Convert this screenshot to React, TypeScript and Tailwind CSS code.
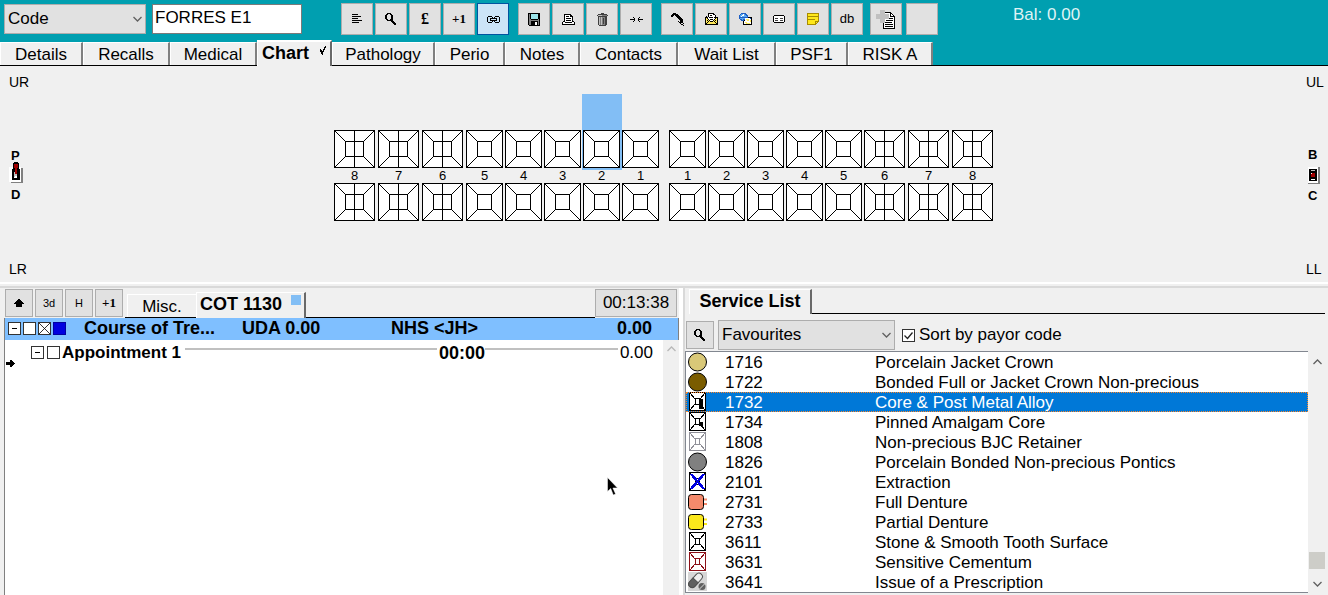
import { ReactNode } from "react"
import clsx from "clsx"

const PALETTE: Record<string, string> = {
    "#": "#000000",
    g: "#808080",
    l: "#c0c0c0",
    d: "#404040",
    w: "#ffffff",
    c: "#9be4ea",
    y: "#ffe95c",
    b: "#1f5fc4",
    s: "#58a8f0",
    r: "#a00000",
}

// small bitmap icons, one character per pixel
const Pixels = ({ rows, className }: { rows: string[]; className?: string }) => (
    <svg
        width={rows[0].length}
        height={rows.length}
        shapeRendering="crispEdges"
        className={clsx("shrink-0", className)}
        aria-hidden="true"
    >
        {rows.map((row, y) =>
            row.split("").map((c, x) =>
                PALETTE[c] ? <rect key={`${x}-${y}`} x={x} y={y} width={1} height={1} fill={PALETTE[c]} /> : null
            )
        )}
    </svg>
)

const LINES = [
    "######....",
    "..........",
    "#########.",
    "..........",
    "######....",
    "..........",
    "##########",
    "..........",
    "#######...",
    "..........",
]

const SEARCH = [
    "..####......",
    ".##..##.....",
    "##....##....",
    "##....##....",
    "##....##....",
    "##....##....",
    ".##..###....",
    "..######....",
    "......###...",
    ".......###..",
    "........###.",
    ".........##.",
]

const LINK = [
    ".####...####.",
    "#....#.#....#",
    "#..#######..#",
    "#..#.....#..#",
    "#..#######..#",
    "#....#.#....#",
    ".####...####.",
]

const SAVE = [
    "############",
    "#g#ccccccc##",
    "#g#ccccccc##",
    "#g#ccccccc##",
    "#g#ccccccc##",
    "#g#ccccccc##",
    "#gg#######g#",
    "#gggggggggg#",
    "#gg#######g#",
    "#gg####ww#g#",
    "#gg####ww#g#",
    "#gg####ww#g#",
    ".###########",
]

const PRINT = [
    "..#######....",
    "..#wwwww##...",
    "..#w###w###..",
    "..#wwwwwww#..",
    "..#w#####w#..",
    "..#wwwwwww#..",
    "..#w#####w#..",
    ".##wwwwwww##.",
    "#ww#######ww#",
    "#wwwwwwwwwww#",
    "#############",
]

const TRASH = [
    "....ddd....",
    ".ddddddddd.",
    "dllllgggggd",
    ".ddddddddd.",
    ".dlglgggdd.",
    ".dlglgdgdd.",
    ".dlglgdgdd.",
    ".dlglgdgdd.",
    ".dlglgdgdd.",
    ".dlglgdgdd.",
    ".dlglgdgdd.",
    ".dlglgggdd.",
    "..ddddddd..",
]

const MERGE = [
    "...#.....#...",
    "....#...#....",
    "#####...#####",
    "....#...#....",
    "...#.....#...",
]

const PHONE = [
    "..###........",
    ".######......",
    "###.####.....",
    "##...####....",
    "......####...",
    ".......####..",
    "........####.",
    ".........###.",
    ".......#.###.",
    "........####.",
    ".........#..#",
    "..........##.",
    "............#",
]

const MAIL = [
    "...######....",
    "...#wwww##...",
    "...#w##www#..",
    ".#.#wwwwww#..",
    "###w####w####",
    "#y#wwwwwww#y#",
    "#yy#w###w#yy#",
    "#y#y#www#y#y#",
    "#yy#y###y#yy#",
    "#y#yyyyyyy#y#",
    "##yyyyyyyyy##",
    "#############",
]

const WEBMAIL = [
    "..bbbbb......",
    ".bsswsbb.....",
    "bsswwssbb....",
    "bswsssssb....",
    "bbbbbbbbb####",
    "bssssswwwwwb#",
    ".bbsbbwyyyww#",
    "..bbb#wwyywy#",
    "....#wwwwwwy#",
    "....#wyywwww#",
    "....#wwyyyyw#",
    "....#########",
]

const CARD = [
    ".##########.",
    "#wwwwwwwwww#",
    "#wwwwwwwwww#",
    "#wdddwwdddw#",
    "#wwwwwwwwww#",
    "#wdddwwdddw#",
    "#wwwwwwwwww#",
    ".##########.",
]

const COPY = [
    "....lllll...........",
    "....lllll...........",
    "....lllll######.....",
    "....lllllwwwww##....",
    "lllllllllllllw#w#...",
    "lllllllllllllw#ww#..",
    "lllllllllllllw#####.",
    "lllllllllllllwwwww#.",
    "lllllllllllll####w#.",
    "....lllllwwwwwwwww#.",
    "....lllllw#######w#.",
    "....lllllwwwwwwwww#.",
    "....lllll#######ww#.",
    ".......#wwwwwwwwww#.",
    ".......#w########w#.",
    ".......#wwwwwwwwww#.",
    ".......#w########w#.",
    ".......#wwwwwwwwww#.",
    ".......############.",
]

const UP = [
    "....##....",
    "...####...",
    "..######..",
    ".########.",
    "##########",
    "..######..",
    "..######..",
    "..######..",
]

const ARROW = [
    "....##...",
    "....###..",
    "########.",
    "#########",
    "########.",
    "....###..",
    "....##...",
]

const TICK = [
    ".....#",
    "....##",
    "....#.",
    "#..##.",
    "##.#..",
    "####..",
    ".##...",
    ".##...",
    "..#...",
]

const SWITCH_UP = [
    ".....####.....",
    "....######....",
    "....#rrrr#....",
    "....#rrrr#....",
    "....#rrrr#....",
    "wwww#rrrr#ww..",
    "wwww##rr##wwgg",
    "www###rr###wgg",
    "www###rr###wgg",
    "www###rr###wgg",
    "www##lrr###wgg",
    "www##lrr###wgg",
    "www##lll###wgg",
    "www##lll###wgg",
    "www##lww###wgg",
    "www##www###wgg",
    "www########wgg",
    "www########wgg",
    "wwwwwwwwwwwwgg",
    "wwwwwwwwwwwwgg",
    "..gggggggggggg",
]

const SWITCH_MID = [
    "wwwwwwwwwwgg",
    "wwwwwwwwwwgg",
    "w########wgg",
    "w##llll##wgg",
    "w########wgg",
    "w########wgg",
    "w##wrrr##wgg",
    "w##rrrr##wgg",
    "w##rrrr##wgg",
    "w##rrrr##wgg",
    "w########wgg",
    "w########wgg",
    "w##wwww##wgg",
    "w########wgg",
    "wwwwwwwwwwgg",
    "wwwwwwwwwwgg",
    "gggggggggggg",
]

const Note = () => (
    <svg width="12" height="12" shapeRendering="crispEdges" aria-hidden="true">
        <path d="M.5 .5h11v8l-3 3h-8z" fill="#ffe81a" stroke="#a88c00" />
        <path d="M1 3.5h10M1 6.5h7M8.5 11v-3h3" fill="none" stroke="#a88c00" />
    </svg>
)

const Chevron = ({ up, className }: { up?: boolean; className?: string }) => (
    <svg width="9" height="6" viewBox="0 0 9 6" fill="none" stroke="currentColor" strokeWidth="1.3" className={className} aria-hidden="true">
        <path d={up ? "M.5 5l4-4 4 4" : "M.5 1l4 4 4-4"} />
    </svg>
)

type ToolButtonProps = { label: string; active?: boolean; small?: boolean; children?: ReactNode }

const ToolButton = ({ label, active, small, children }: ToolButtonProps) => (
    <button
        aria-label={label}
        className={clsx(
            "flex shrink-0 items-center justify-center border",
            small ? "size-7 text-[11px]" : "size-8 text-sm",
            active ? "border-[#0054a0] bg-[#cce4f7]" : "border-[#adadad] bg-[#e1e1e1]"
        )}
    >
        {children}
    </button>
)

const PlusOne = () => <span className="font-['Liberation_Serif',serif] text-[13px] font-bold">+1</span>

const Combo = ({ label, value, className }: { label: string; value: string; className: string }) => (
    <div className={clsx("relative shrink-0", className)}>
        <select
            aria-label={label}
            className="block h-[30px] w-full appearance-none border border-[#adadad] bg-[#e1e1e1] pl-[3px] leading-7"
        >
            <option>{value}</option>
        </select>
        <Chevron className="pointer-events-none absolute top-3 right-1 text-[#606060]" />
    </div>
)

const Toolbar = () => (
    <div className="flex h-[42px] items-start pt-[3px] pl-1">
        <Combo label="Search by" value="Code" className="mt-px w-[142px]" />
        <input
            aria-label="Patient"
            defaultValue="FORRES E1"
            className="mt-px ml-1.5 h-[30px] w-[150px] border border-[#7a7a7a] bg-white px-0.5 pb-0.5"
        />
        <div className="ml-[39px] flex gap-0.5">
            <ToolButton label="List"><Pixels rows={LINES} /></ToolButton>
            <ToolButton label="Find"><Pixels rows={SEARCH} /></ToolButton>
            <ToolButton label="Payments">
                <span className="font-['Liberation_Serif',serif] text-base font-bold">£</span>
            </ToolButton>
            <ToolButton label="Add one"><PlusOne /></ToolButton>
            <ToolButton label="Link" active><Pixels rows={LINK} /></ToolButton>
        </div>
        <div className="ml-[9px] flex gap-0.5">
            <ToolButton label="Save"><Pixels rows={SAVE} /></ToolButton>
            <ToolButton label="Print"><Pixels rows={PRINT} /></ToolButton>
            <ToolButton label="Delete"><Pixels rows={TRASH} /></ToolButton>
            <ToolButton label="Merge"><Pixels rows={MERGE} /></ToolButton>
        </div>
        <div className="ml-[9px] flex gap-0.5">
            <ToolButton label="Phone"><Pixels rows={PHONE} /></ToolButton>
            <ToolButton label="Letter"><Pixels rows={MAIL} /></ToolButton>
            <ToolButton label="Email"><Pixels rows={WEBMAIL} /></ToolButton>
            <ToolButton label="SMS"><Pixels rows={CARD} /></ToolButton>
            <ToolButton label="Sticky note"><Note /></ToolButton>
            <ToolButton label="Database"><span className="text-[13px]">db</span></ToolButton>
        </div>
        <div className="ml-[7px] flex gap-1">
            <ToolButton label="New document"><Pixels rows={COPY} /></ToolButton>
            <ToolButton label="Blank" />
        </div>
        <p className="ml-[75px] leading-6 text-[#dff3f5]">Bal: 0.00</p>
    </div>
)

const TABS = [
    { name: "Details", width: "w-[83px]" },
    { name: "Recalls", width: "w-[87px]" },
    { name: "Medical", width: "w-[87px]" },
    { name: "Chart", width: "w-[75px]" },
    { name: "Pathology", width: "w-[103px]" },
    { name: "Perio", width: "w-[70px]" },
    { name: "Notes", width: "w-[75px]" },
    { name: "Contacts", width: "w-[98px]" },
    { name: "Wait List", width: "w-[98px]" },
    { name: "PSF1", width: "w-[72px]" },
    { name: "RISK A", width: "w-[85px]" },
]

const TabBar = () => (
    <nav className="flex h-6 items-end border-b border-black">
        {TABS.map(({ name, width }) =>
            name === "Chart" ? (
                <button
                    key={name}
                    className={clsx(
                        "-mb-px flex h-[26px] shrink-0 items-start justify-between border-t-2 border-r-2 border-l border-white border-r-[#696969] bg-[#f0f0f0] pr-1 pl-1 text-lg leading-[22px] font-bold",
                        width
                    )}
                >
                    {name}
                    <Pixels rows={TICK} className="mt-1" />
                </button>
            ) : (
                <button
                    key={name}
                    className={clsx(
                        "h-[23px] shrink-0 border-t border-r-2 border-l border-white border-r-[#808080] bg-[#f0f0f0] pt-0.5 leading-5",
                        width
                    )}
                >
                    {name}
                </button>
            )
        )}
    </nav>
)

const Tooth = ({ molar }: { molar: boolean }) => {
    const w = molar ? 41 : 37
    const r = w - 12
    return (
        <svg width={w} height="38" fill="none" stroke="#000" shapeRendering="crispEdges" className="relative block">
            <rect x=".5" y=".5" width={w - 1} height="37" fill="#fff" />
            <path d={`M0 0L11.5 11.5M${w} 0L${r + 0.5} 11.5M0 38L11.5 26.5M${w} 38L${r + 0.5} 26.5`} />
            <rect x="11.5" y="11.5" width={r - 11} height="15" />
            {molar && <path d="M20.5 0v38" />}
        </svg>
    )
}

const Quadrants = ({ teeth, selected }: { teeth: number[]; selected?: number }) => (
    <div className="flex">
        {teeth.map((n) => {
            const molar = n > 5
            return (
                <div key={n} className={clsx("relative", molar ? "w-11" : "w-[39px]")}>
                    {n === selected && <div className="absolute -top-9 -left-px h-[76px] w-10 bg-[#82bef5]" />}
                    <Tooth molar={molar} />
                    <p className={clsx("relative text-center text-[13px] leading-[15px]", molar ? "w-[41px]" : "w-[37px]")}>{n}</p>
                    <Tooth molar={molar} />
                </div>
            )
        })}
    </div>
)

const ToothChart = () => (
    <section className="flex justify-between text-sm leading-4">
        <div className="flex w-12 flex-col justify-between pt-2 pb-[5px] pl-[9px]">
            <p>UR</p>
            <div className="flex flex-col items-start text-[13px] leading-3 font-bold">
                <span className="pl-0.5">P</span>
                <Pixels rows={SWITCH_UP} className="mb-1.5" />
                <span className="pl-0.5">D</span>
            </div>
            <p>LR</p>
        </div>
        <div className="flex gap-2 pt-16 pb-[61px] pl-0.5">
            <Quadrants teeth={[8, 7, 6, 5, 4, 3, 2, 1]} selected={2} />
            <Quadrants teeth={[1, 2, 3, 4, 5, 6, 7, 8]} />
        </div>
        <div className="flex w-12 flex-col justify-between pt-2 pb-[5px] pl-[26px]">
            <p>UL</p>
            <div className="flex flex-col items-start pl-0.5 text-[13px] leading-3 font-bold">
                <span>B</span>
                <Pixels rows={SWITCH_MID} className="my-1.5" />
                <span>C</span>
            </div>
            <p>LL</p>
        </div>
    </section>
)

const TreeBox = ({ kind }: { kind: "minus" | "empty" | "cross" | "blue" }) => (
    <svg width="13" height="13" fill="none" stroke="#000" className="shrink-0" aria-hidden="true">
        <rect x=".5" y=".5" width="12" height="12" fill={kind === "blue" ? "#0000e0" : "#fff"} stroke={kind === "blue" ? "#0000a0" : "#333"} />
        {kind === "minus" && <path d="M4 6.5h5" />}
        {kind === "cross" && <path d="M1 1l11 11M12 1L1 12" strokeWidth=".8" />}
    </svg>
)

const Treatment = () => (
    <section className="flex min-w-0 flex-1 flex-col border-r-4 border-white pt-px pl-1">
        <div className="flex h-[29px] items-start pr-0.5 pl-px">
            <div className="flex gap-0.5">
                <ToolButton label="Up" small><Pixels rows={UP} /></ToolButton>
                <ToolButton label="3D view" small>3d</ToolButton>
                <ToolButton label="History" small>H</ToolButton>
                <ToolButton label="Add one" small><PlusOne /></ToolButton>
            </div>
            <div className="ml-0.5 flex h-full flex-1 items-end border-b border-black pl-0.5">
                <button className="h-[23px] w-[69px] border-t border-l border-white leading-6">Misc.</button>
                <button className="-mb-px flex h-[26px] w-[110px] items-start justify-between border-t border-r-2 border-l border-white border-r-[#696969] bg-[#f0f0f0] pr-[3px] pl-[3px] text-lg leading-[22px] font-bold">
                    COT 1130
                    <span className="mt-0.5 size-2.5 bg-[#82bef5]" />
                </button>
            </div>
            <button className="h-7 w-[82px] border border-[#adadad] bg-[#e1e1e1] leading-6">00:13:38</button>
        </div>
        <div className="relative flex flex-1 flex-col border-l border-[#808080] bg-white">
            <div className="flex h-[22px] items-center border-r border-[#808080] bg-[#7fbfff] pr-[26px] pb-0.5 text-lg leading-5 font-bold">
                <div className="flex w-[79px] shrink-0 gap-0.5 pl-[3px]">
                    <TreeBox kind="minus" />
                    <TreeBox kind="empty" />
                    <TreeBox kind="cross" />
                    <TreeBox kind="blue" />
                </div>
                <span className="w-[158px] shrink-0">Course of Tre...</span>
                <span className="w-[149px] shrink-0">UDA 0.00</span>
                <span className="shrink-0">NHS &lt;JH&gt;</span>
                <span className="flex-1 text-right">0.00</span>
            </div>
            <div className="flex flex-1">
                <div className="min-w-0 flex-1">
                    <div className="flex h-6 items-center pt-px pr-2.5 pl-[26px]">
                        <div className="flex w-[31px] shrink-0 gap-[3px]">
                            <TreeBox kind="minus" />
                            <TreeBox kind="empty" />
                        </div>
                        <span className="w-[123px] shrink-0 font-bold">Appointment 1</span>
                        <hr className="mr-0.5 mb-2 w-[252px] shrink-0 border-t-2 border-[#c0c0c0]" />
                        <span className="text-lg font-bold">00:00</span>
                        <hr className="mr-0.5 mb-2 flex-1 border-t-2 border-[#c0c0c0]" />
                        <span>0.00</span>
                    </div>
                    <Pixels rows={ARROW} className="ml-px -mt-1" />
                </div>
                <div className="flex w-4 justify-center bg-[#f0f0f0] pt-1.5 text-[#b8b8b8]">
                    <Chevron up />
                </div>
            </div>
            <svg width="12" height="19" className="absolute top-[159px] left-[602px]" aria-hidden="true">
                <path d="M.5 .5v14l3.200-3 2.600 6.500 2.300-1-2.700-6h4.600z" fill="#000" stroke="#fff" strokeWidth=".5" />
            </svg>
        </div>
    </section>
)

const Round = ({ fill }: { fill: string }) => <circle cx="9.5" cy="10" r="9" fill={fill} stroke="#000" />

const Surface = ({ color, children }: { color: string; children?: ReactNode }) => (
    <g fill="none" stroke={color} shapeRendering="crispEdges">
        <rect x="1.5" y=".5" width="16" height="18" fill="#fff" />
        <path d="M2 1l5 6M17 1l-5 6M2 18l5-6M17 18l-5-6" />
        <rect x="7.5" y="6.5" width="4" height="6" />
        {children}
    </g>
)

const Denture = ({ fill }: { fill: string }) => (
    <>
        <path d="M16 7.5h3M16 12h3" stroke={fill} strokeWidth="2" />
        <rect x=".5" y="2.5" width="15" height="15" rx="3" fill={fill} stroke="#000" />
    </>
)

const SERVICES = [
    { code: "1716", name: "Porcelain Jacket Crown", icon: <Round fill="#d9c878" /> },
    { code: "1722", name: "Bonded Full or Jacket Crown Non-precious", icon: <Round fill="#7a5c00" /> },
    {
        code: "1732",
        name: "Core & Post Metal Alloy",
        icon: (
            <Surface color="#000">
                <path d="M11.5 7.5h3v9h-3z" fill="#000" />
            </Surface>
        ),
    },
    {
        code: "1734",
        name: "Pinned Amalgam Core",
        icon: (
            <Surface color="#000">
                <path d="M11.5 10.5h3v3h-3z" fill="#000" />
            </Surface>
        ),
    },
    { code: "1808", name: "Non-precious BJC Retainer", icon: <Surface color="#909098" /> },
    { code: "1826", name: "Porcelain Bonded Non-precious Pontics", icon: <Round fill="#808080" /> },
    {
        code: "2101",
        name: "Extraction",
        icon: (
            <Surface color="#000">
                <path d="M3 2l13 15M16 2L3 17" stroke="#0000e0" strokeWidth="2.5" />
            </Surface>
        ),
    },
    { code: "2731", name: "Full Denture", icon: <Denture fill="#f48a6c" /> },
    { code: "2733", name: "Partial Denture", icon: <Denture fill="#fbe81c" /> },
    { code: "3611", name: "Stone & Smooth Tooth Surface", icon: <Surface color="#000" /> },
    { code: "3631", name: "Sensitive Cementum", icon: <Surface color="#8c1018" /> },
    {
        code: "3641",
        name: "Issue of a Prescription",
        icon: (
            <>
                <rect width="19" height="19" fill="#d6d6d6" />
                <g transform="rotate(-48 9 9)" stroke="#505050">
                    <rect x="0" y="4" width="17" height="7" rx="3.5" fill="#eee" />
                    <path d="M8.500 4H3.500a3.500 3.500 0 000 7h5z" fill="#606060" />
                </g>
                <circle cx="14" cy="14.500" r="3.500" fill="#606060" />
                <path d="M11.500 17l5-5" stroke="#ddd" />
            </>
        ),
    },
]

const ServiceList = () => (
    <section className="min-w-0 border-l-2 border-[#d9d9d9] pr-[3px]">
        <div className="flex h-[26px] items-end pl-1">
            <button className="flex h-[25px] w-[123px] items-start justify-center border-t border-r-2 border-l border-white border-r-[#696969] text-lg leading-[22px] font-bold">
                Service List
            </button>
            <div className="flex-1 border-b border-black" />
        </div>
        <div className="flex items-center pt-1.5 pb-px pl-px">
            <ToolButton label="Find service" small><Pixels rows={SEARCH} /></ToolButton>
            <Combo label="Service group" value="Favourites" className="ml-1 w-[177px]" />
            <label className="ml-[7px] flex items-center gap-1">
                <span className="relative size-[13px]">
                    <input type="checkbox" defaultChecked className="block size-[13px] appearance-none border border-[#333] bg-white" />
                    <svg width="13" height="13" className="pointer-events-none absolute top-0 left-0" aria-hidden="true">
                        <path d="M2.500 6.500l3 3 5-6" fill="none" stroke="#222" strokeWidth="1.300" />
                    </svg>
                </span>
                Sort by payor code
            </label>
        </div>
        <div className="flex">
            <div className="min-w-0 flex-1 border-y border-l border-[#828790] bg-white">
                <table className="w-full table-fixed border-collapse text-left leading-[18px]">
                    <tbody>
                        {SERVICES.map(({ code, name, icon }) => (
                            <tr
                                key={code}
                                className={clsx(
                                    "h-5",
                                    code === "1732" && "bg-[#0078d7] text-white outline-1 -outline-offset-1 outline-[#ff8728] outline-dotted"
                                )}
                            >
                                <td className="w-[39px] p-0 pl-0.5">
                                    <svg width="19" height="20" className="block">{icon}</svg>
                                </td>
                                <td className="w-[150px] p-0 pt-0.5">{code}</td>
                                <td className="p-0 pt-0.5">{name}</td>
                            </tr>
                        ))}
                    </tbody>
                </table>
            </div>
            <div className="flex w-[17px] flex-col items-center justify-between pt-2 pb-1.5 pl-px text-[#606060]">
                <Chevron up />
                <div className="flex w-full flex-col items-center gap-3">
                    <div className="h-[17px] w-full bg-[#cdcdc8]" />
                    <Chevron />
                </div>
            </div>
        </div>
    </section>
)

export default function App() {
    return (
        <div className="flex min-h-screen flex-col overflow-hidden bg-[#f0f0f0] font-['Liberation_Sans',Arial,sans-serif] text-[17px] text-black">
            <header className="bg-[#009fb0]">
                <Toolbar />
                <TabBar />
            </header>
            <ToothChart />
            <div className="h-1.5 border-t-2 border-b-2 border-t-white border-b-[#d9d9d9]" />
            <main className="grid flex-1 grid-cols-[683fr_645fr]">
                <Treatment />
                <ServiceList />
            </main>
        </div>
    )
}
